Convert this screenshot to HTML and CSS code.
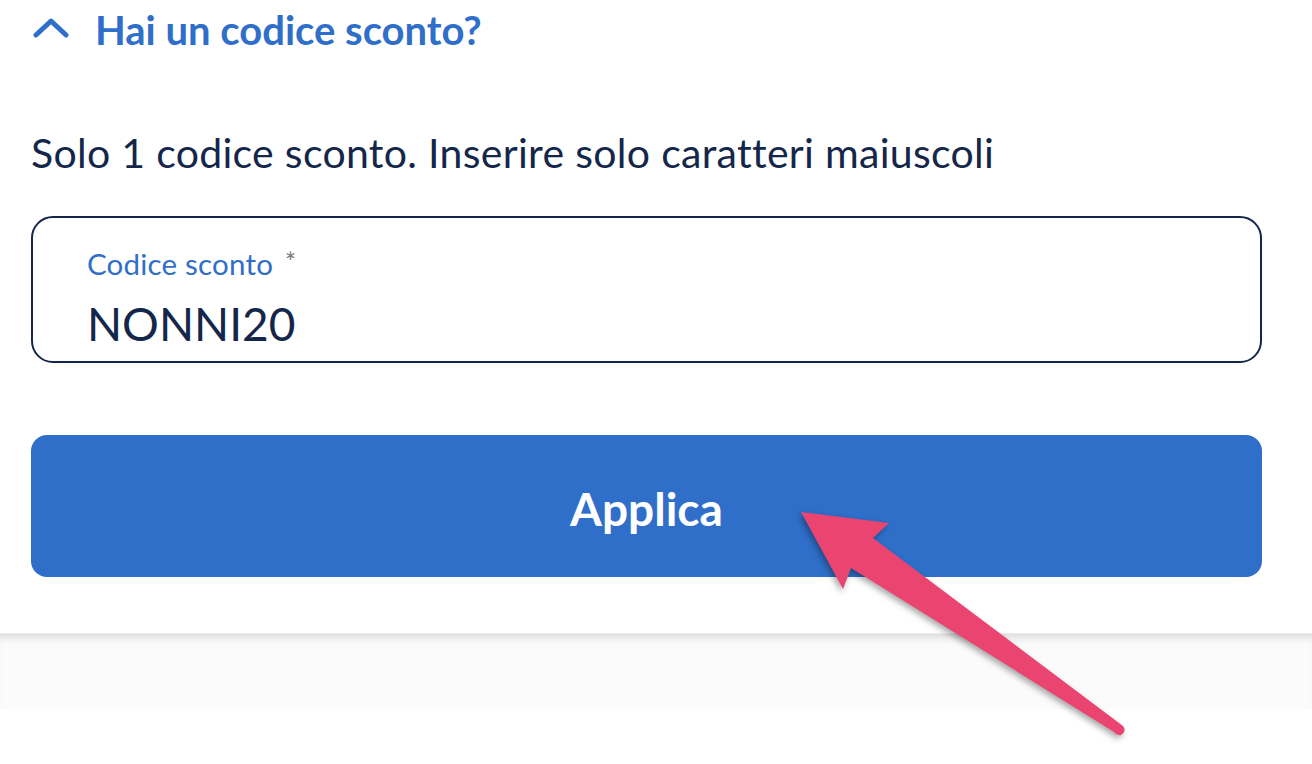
FILE: index.html
```html
<!DOCTYPE html>
<html lang="it">
<head>
    <meta charset="UTF-8">
    <meta name="viewport" content="width=device-width, initial-scale=1.0">
    <title>Codice sconto</title>
    <link rel="stylesheet" href="styles.css">
</head>
<body>
    <div class="discount">
        <button class="toggle" type="button">
            <svg class="chevron" width="36" height="20" viewBox="0 0 36 20">
                <path d="M3 17 L18 3 L33 17" fill="none" stroke="#2f6fc9" stroke-width="5" stroke-linecap="round" stroke-linejoin="round"/>
            </svg>
            <span>Hai un codice sconto?</span>
        </button>

        <p class="hint">Solo 1 codice sconto. Inserire solo caratteri maiuscoli</p>

        <label class="field">
            <span class="field-label">Codice sconto <span class="req">*</span></span>
            <input class="field-input" type="text" value="NONNI20">
        </label>

        <button class="apply" type="button">Applica</button>
    </div>
    <div class="footer-band"></div>

    <svg class="arrow" width="1312" height="764" viewBox="0 0 1312 764">
        <path d="M801 512 L889 523 L873 538 L1123 726 Q1127 731 1121 735 Q1117 736 1114 732 L851 568 L843 589 Z" fill="#ea4570"/>
    </svg>
</body>
</html>
```

FILE: styles.css
```css
body {
    margin: 0;
    padding: 0;
    background: #fff;
    font-family: Lato, "Open Sans", sans-serif;
    color: #14264a;
}
.discount {
    padding: 6px 50px 0 31px;
}
.toggle {
    display: flex;
    align-items: center;
    gap: 26px;
    padding: 0;
    border: none;
    background: none;
    font-family: inherit;
    font-size: 40px;
    font-weight: bold;
    line-height: 48px;
    color: #2f6fc9;
    cursor: pointer;
}
.chevron {
    margin-left: 2px;
    margin-top: -4px;
}
.hint {
    margin: 74px 0 0;
    font-size: 41px;
    letter-spacing: 0.3px;
    line-height: 1.2;
}
.field {
    display: block;
    margin-top: 39px;
    height: 147px;
    box-sizing: border-box;
    padding: 28px 54px 0;
    border: 2.5px solid #14264a;
    border-radius: 22px;
}
.field-label {
    display: block;
    font-size: 29.5px;
    letter-spacing: 0.2px;
    line-height: 1.2;
    color: #2f6fc9;
}
.req {
    margin-left: 4px;
    color: #7a7a7a;
    font-size: 27px;
    vertical-align: 3px;
}
.field-input {
    display: block;
    width: 100%;
    margin-top: 14px;
    padding: 0;
    border: none;
    outline: none;
    background: none;
    font-family: inherit;
    font-size: 46px;
    line-height: 1.2;
    color: #14264a;
}
.apply {
    display: block;
    width: 100%;
    height: 142px;
    margin-top: 72px;
    padding: 5px 0 0;
    border: none;
    border-radius: 16px;
    background: #2f6fc9;
    color: #fff;
    font-family: inherit;
    font-size: 46px;
    font-weight: bold;
    cursor: pointer;
}
.footer-band {
    margin-top: 56px;
    height: 75px;
    background: #fbfbfb;
    border-top: 1px solid #ececec;
    box-shadow: inset 0 9px 10px -6px rgba(0, 0, 0, 0.14);
}
.arrow {
    position: absolute;
    top: 0;
    left: 0;
    pointer-events: none;
    filter: drop-shadow(-2px 3px 3px rgba(0, 0, 0, 0.35));
}
```
